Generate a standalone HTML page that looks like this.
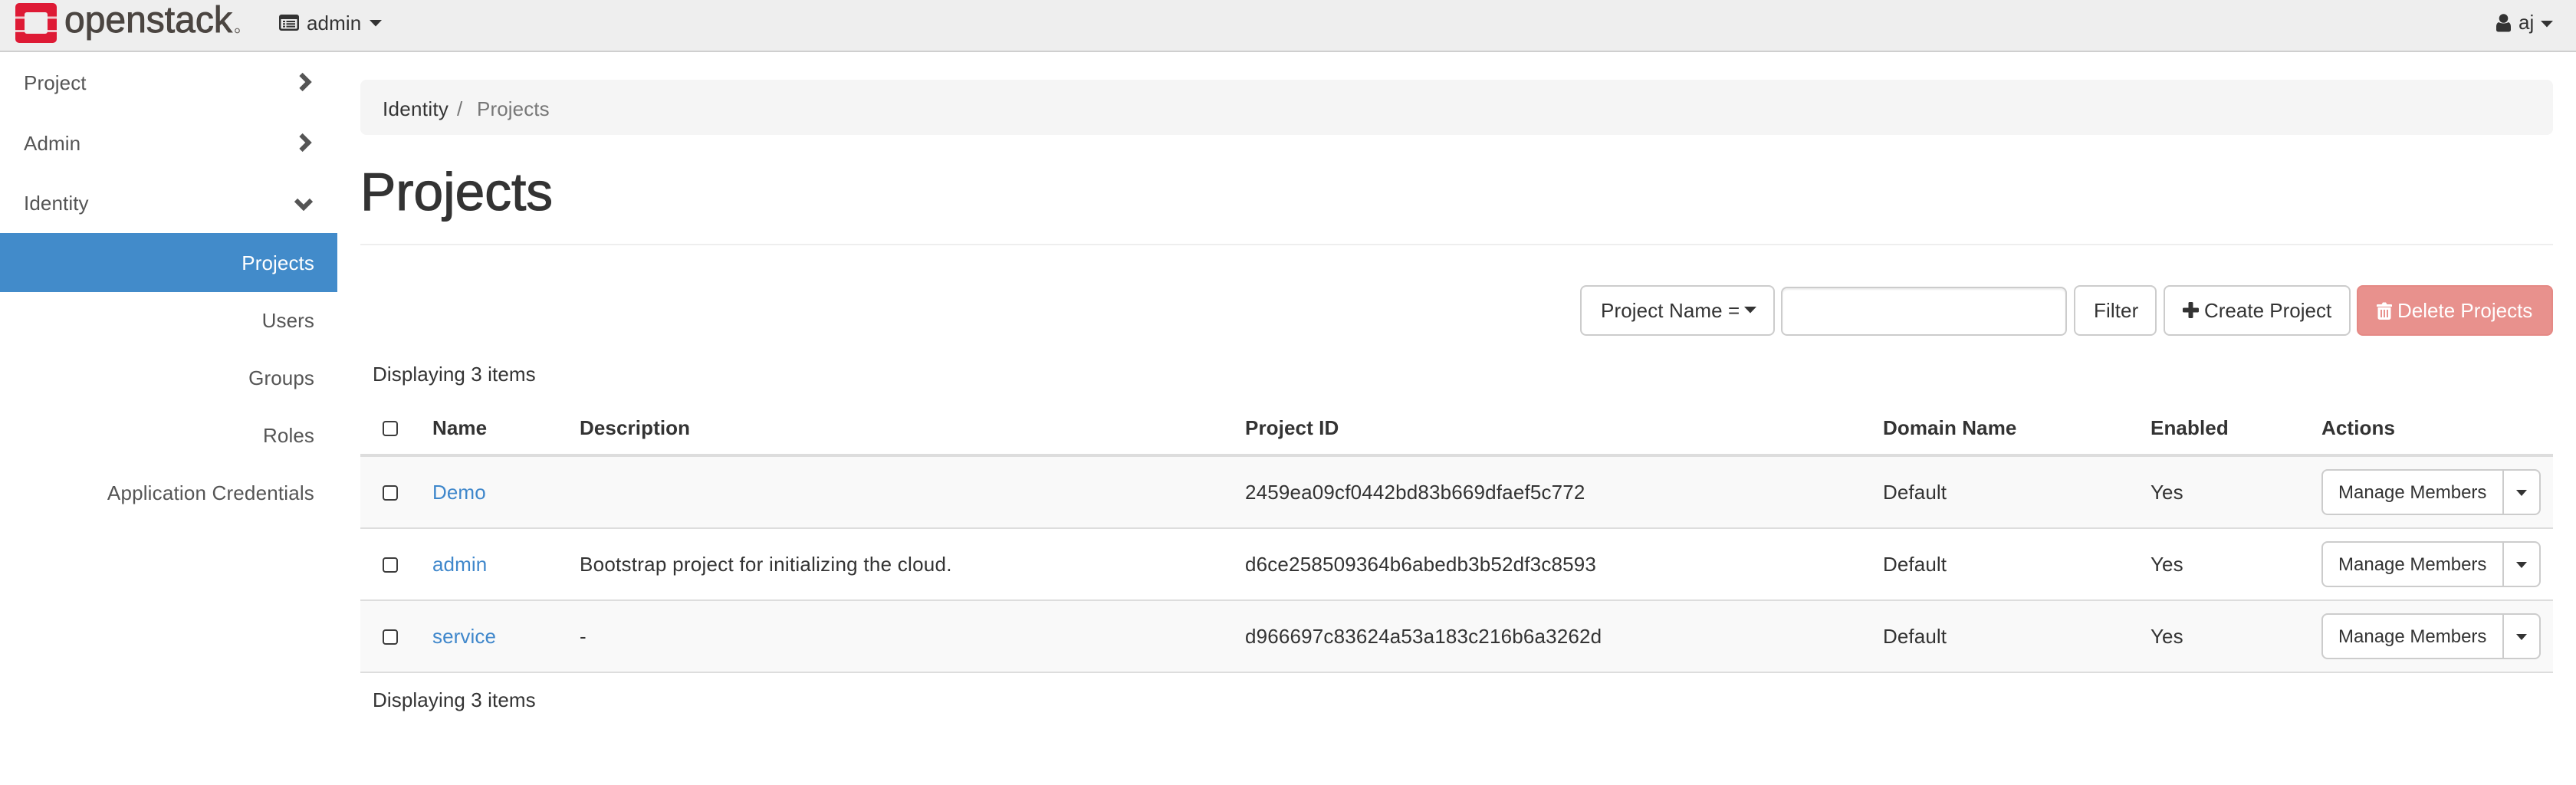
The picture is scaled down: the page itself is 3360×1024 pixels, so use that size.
<!DOCTYPE html>
<html><head><meta charset="utf-8"><title>Projects</title>
<style>
html,body{margin:0;padding:0;width:3360px;height:1024px;background:#fff;overflow:hidden}
body{position:relative;font-family:"Liberation Sans",sans-serif;font-size:26px;color:#333}
.a,.t{position:absolute;display:block}
.t{white-space:nowrap;line-height:26px;height:26px;letter-spacing:.1px}
.r{text-align:right;right:2950px}
.s{color:#555}
.b{font-weight:bold}
.l{color:#3f87cb}
.id{letter-spacing:.17px}
.btn{position:absolute;box-sizing:border-box;background:#fff;border:2px solid #ccc;border-radius:8px}
.sm{font-size:24px;line-height:24px;height:24px;letter-spacing:0}
svg{position:absolute;display:block}
.cb{position:absolute;box-sizing:border-box;left:499px;width:20px;height:20px;border:2px solid #3c3c3c;border-radius:4px;background:#fff}
</style></head><body>
<div class="a" style="left:0;top:0;width:3360px;height:66px;background:#eee"></div>
<div class="a" style="left:0;top:66px;width:3360px;height:2px;background:#cfcfcf"></div>

<svg style="left:20px;top:4px" width="54" height="52" viewBox="0 0 54 52">
<path fill="#de1a35" fill-rule="evenodd" d="M5 0H49A5 5 0 0 1 54 5V47A5 5 0 0 1 49 52H5A5 5 0 0 1 0 47V5A5 5 0 0 1 5 0ZM15 12A3 3 0 0 0 12 15V37A3 3 0 0 0 15 40H39A3 3 0 0 0 42 37V15A3 3 0 0 0 39 12Z"/>
<rect x="0" y="17.500" width="12" height="3" fill="#f1c6cc"/><rect x="42" y="17.500" width="12" height="3" fill="#f1c6cc"/>
<rect x="0" y="35" width="12" height="3" fill="#f1c6cc"/><rect x="42" y="35" width="12" height="3" fill="#f1c6cc"/>
</svg>
<svg style="left:80px;top:0" width="240" height="66" viewBox="0 0 240 66">
<text x="4" y="42" font-family="Liberation Sans" font-size="48" fill="#4b4541" stroke="#4b4541" stroke-width=".9">openstack</text>
<circle cx="229.500" cy="40" r="2.800" fill="none" stroke="#6a6561" stroke-width="1.200"/>
</svg>

<svg style="left:364px;top:19px" width="26" height="22" viewBox="0 0 26 22">
<path fill="#333" fill-rule="evenodd" d="M3 0H23A3 3 0 0 1 26 3V18A3 3 0 0 1 23 21H3A3 3 0 0 1 0 18V3A3 3 0 0 1 3 0ZM2.500 6V17.500A1 1 0 0 0 3.500 18.500H22.500A1 1 0 0 0 23.500 17.500V6Z"/>
<path fill="#333" d="M5 8h3v2H5zM9.500 8H21v2H9.500zM5 11.300h3v2H5zM9.500 11.300H21v2H9.500zM5 14.600h3v2H5zM9.500 14.600H21v2H9.500z"/>
</svg>
<div class="t" style="left:400px;top:17px;">admin</div>
<svg style="left:482px;top:26px" width="16" height="9" viewBox="0 0 16 9"><path fill="#333" d="M0 0H16L8 8.500Z"/></svg>

<svg style="left:3256px;top:18px" width="19" height="24" viewBox="0 0 19 24"><circle cx="9.500" cy="6" r="5.800" fill="#333"/><path fill="#333" d="M3.500 11C5 13 14 13 15.500 11C18 11.500 19 14 19 17V21A2.500 2.500 0 0 1 16.500 23.500H2.500A2.500 2.500 0 0 1 0 21V17C0 14 1 11.500 3.500 11Z"/></svg>
<div class="t" style="left:3285px;top:16px;">aj</div>
<svg style="left:3314px;top:27px" width="16" height="9" viewBox="0 0 16 9"><path fill="#333" d="M0 0H16L8 8.500Z"/></svg>

<div class="t s" style="left:31px;top:95px">Project</div>
<div class="t s" style="left:31px;top:174px">Admin</div>
<div class="t s" style="left:31px;top:252px">Identity</div>
<svg style="left:389px;top:94px" width="18" height="26" viewBox="0 0 18 26"><path d="M3.500 3L13.500 13L3.500 23" fill="none" stroke="#555" stroke-width="6"/></svg>
<svg style="left:389px;top:173px" width="18" height="26" viewBox="0 0 18 26"><path d="M3.500 3L13.500 13L3.500 23" fill="none" stroke="#555" stroke-width="6"/></svg>
<svg style="left:383px;top:257px" width="26" height="18" viewBox="0 0 26 18"><path d="M3 4L13 14L23 4" fill="none" stroke="#555" stroke-width="6"/></svg>

<div class="a" style="left:0;top:304px;width:440px;height:77px;background:#428bca"></div>
<div class="t r" style="top:330px;color:#fff">Projects</div>
<div class="t r s" style="top:405px">Users</div>
<div class="t r s" style="top:480px">Groups</div>
<div class="t r s" style="top:555px">Roles</div>
<div class="t r s" style="top:630px;letter-spacing:.18px">Application Credentials</div>

<div class="a" style="left:470px;top:104px;width:2860px;height:72px;background:#f5f5f5;border-radius:8px"></div>
<div class="t" style="left:499px;top:129px;letter-spacing:.3px">Identity</div>
<div class="t" style="left:596px;top:129px;color:#777">/</div>
<div class="t" style="left:622px;top:129px;color:#777">Projects</div>
<div class="t" style="left:470px;top:216px;font-size:69.500px;line-height:68px;height:68px;letter-spacing:0;-webkit-text-stroke:1.1px #333">Projects</div>
<div class="a" style="left:470px;top:318px;width:2860px;height:2px;background:#eee"></div>

<div class="btn" style="left:2061px;top:372px;width:254px;height:66px"></div>
<div class="t" style="left:2088px;top:392px">Project Name =</div>
<svg style="left:2275px;top:400px" width="16" height="9" viewBox="0 0 16 9"><path fill="#333" d="M0 0H16L8 8.500Z"/></svg>
<div class="btn" style="left:2323px;top:374px;width:373px;height:64px;box-shadow:inset 0 2px 2px rgba(0,0,0,.075)"></div>
<div class="btn" style="left:2705px;top:372px;width:108px;height:66px"></div>
<div class="t" style="left:2731px;top:392px">Filter</div>
<div class="btn" style="left:2822px;top:372px;width:244px;height:66px"></div>
<svg style="left:2847px;top:394px" width="21" height="21" viewBox="0 0 21 21"><path fill="#333" d="M7.500 1.500A1.500 1.500 0 0 1 9 0H12A1.500 1.500 0 0 1 13.500 1.500V7.500H19.500A1.500 1.500 0 0 1 21 9V12A1.500 1.500 0 0 1 19.500 13.500H13.500V19.500A1.500 1.500 0 0 1 12 21H9A1.500 1.500 0 0 1 7.500 19.500V13.500H1.500A1.500 1.500 0 0 1 0 12V9A1.500 1.500 0 0 1 1.500 7.500H7.500Z"/></svg>
<div class="t" style="left:2875px;top:392px;letter-spacing:0">Create Project</div>
<div class="btn" style="left:3074px;top:372px;width:256px;height:66px;background:#e8918d;border-color:#e58985"></div>
<svg style="left:3100px;top:394px" width="20" height="23" viewBox="0 0 20 23"><path fill="#fff" fill-rule="evenodd" d="M6.500 3L8 .5H12L13.500 3H19A1 1 0 0 1 20 4V6H0V4A1 1 0 0 1 1 3ZM1.500 7H18.500V20.500A2.500 2.500 0 0 1 16 23H4A2.500 2.500 0 0 1 1.500 20.500ZM5 10V20H7V10ZM9 10V20H11V10ZM13 10V20H15V10Z"/></svg>
<div class="t" style="left:3127px;top:392px;color:#fff;letter-spacing:0">Delete Projects</div>

<div class="t" style="left:486px;top:475px">Displaying 3 items</div>

<div class="cb" style="top:549px"></div>
<div class="t b" style="left:564px;top:545px">Name</div>
<div class="t b" style="left:756px;top:545px">Description</div>
<div class="t b" style="left:1624px;top:545px">Project ID</div>
<div class="t b" style="left:2456px;top:545px">Domain Name</div>
<div class="t b" style="left:2805px;top:545px">Enabled</div>
<div class="t b" style="left:3028px;top:545px">Actions</div>
<div class="a" style="left:470px;top:592px;width:2860px;height:4px;background:#ddd"></div>

<div class="a" style="left:470px;top:596px;width:2860px;height:92px;background:#f9f9f9"></div>
<div class="a" style="left:470px;top:688px;width:2860px;height:2px;background:#ddd"></div>
<div class="a" style="left:470px;top:782px;width:2860px;height:2px;background:#ddd"></div>
<div class="a" style="left:470px;top:784px;width:2860px;height:92px;background:#f9f9f9"></div>
<div class="a" style="left:470px;top:876px;width:2860px;height:2px;background:#ddd"></div>

<div class="cb" style="top:633px"></div>
<div class="t l" style="left:564px;top:629px">Demo</div>
<div class="t id" style="left:1624px;top:629px">2459ea09cf0442bd83b669dfaef5c772</div>
<div class="t" style="left:2456px;top:629px">Default</div>
<div class="t" style="left:2805px;top:629px">Yes</div>
<div class="btn" style="left:3028px;top:612px;width:286px;height:60px"></div>
<div class="a" style="left:3264px;top:612px;width:2px;height:60px;background:#ccc"></div>
<div class="t sm" style="left:3050px;top:631px">Manage Members</div>
<svg style="left:3282px;top:639px" width="14" height="8" viewBox="0 0 14 8"><path fill="#333" d="M0 0H14L7 8Z"/></svg>

<div class="cb" style="top:727px"></div>
<div class="t l" style="left:564px;top:723px">admin</div>
<div class="t" style="left:756px;top:723px;letter-spacing:.26px">Bootstrap project for initializing the cloud.</div>
<div class="t id" style="left:1624px;top:723px">d6ce258509364b6abedb3b52df3c8593</div>
<div class="t" style="left:2456px;top:723px">Default</div>
<div class="t" style="left:2805px;top:723px">Yes</div>
<div class="btn" style="left:3028px;top:706px;width:286px;height:60px"></div>
<div class="a" style="left:3264px;top:706px;width:2px;height:60px;background:#ccc"></div>
<div class="t sm" style="left:3050px;top:725px">Manage Members</div>
<svg style="left:3282px;top:733px" width="14" height="8" viewBox="0 0 14 8"><path fill="#333" d="M0 0H14L7 8Z"/></svg>

<div class="cb" style="top:821px"></div>
<div class="t l" style="left:564px;top:817px">service</div>
<div class="t" style="left:756px;top:817px">-</div>
<div class="t id" style="left:1624px;top:817px">d966697c83624a53a183c216b6a3262d</div>
<div class="t" style="left:2456px;top:817px">Default</div>
<div class="t" style="left:2805px;top:817px">Yes</div>
<div class="btn" style="left:3028px;top:800px;width:286px;height:60px"></div>
<div class="a" style="left:3264px;top:800px;width:2px;height:60px;background:#ccc"></div>
<div class="t sm" style="left:3050px;top:819px">Manage Members</div>
<svg style="left:3282px;top:827px" width="14" height="8" viewBox="0 0 14 8"><path fill="#333" d="M0 0H14L7 8Z"/></svg>

<div class="t" style="left:486px;top:900px">Displaying 3 items</div>
</body></html>
